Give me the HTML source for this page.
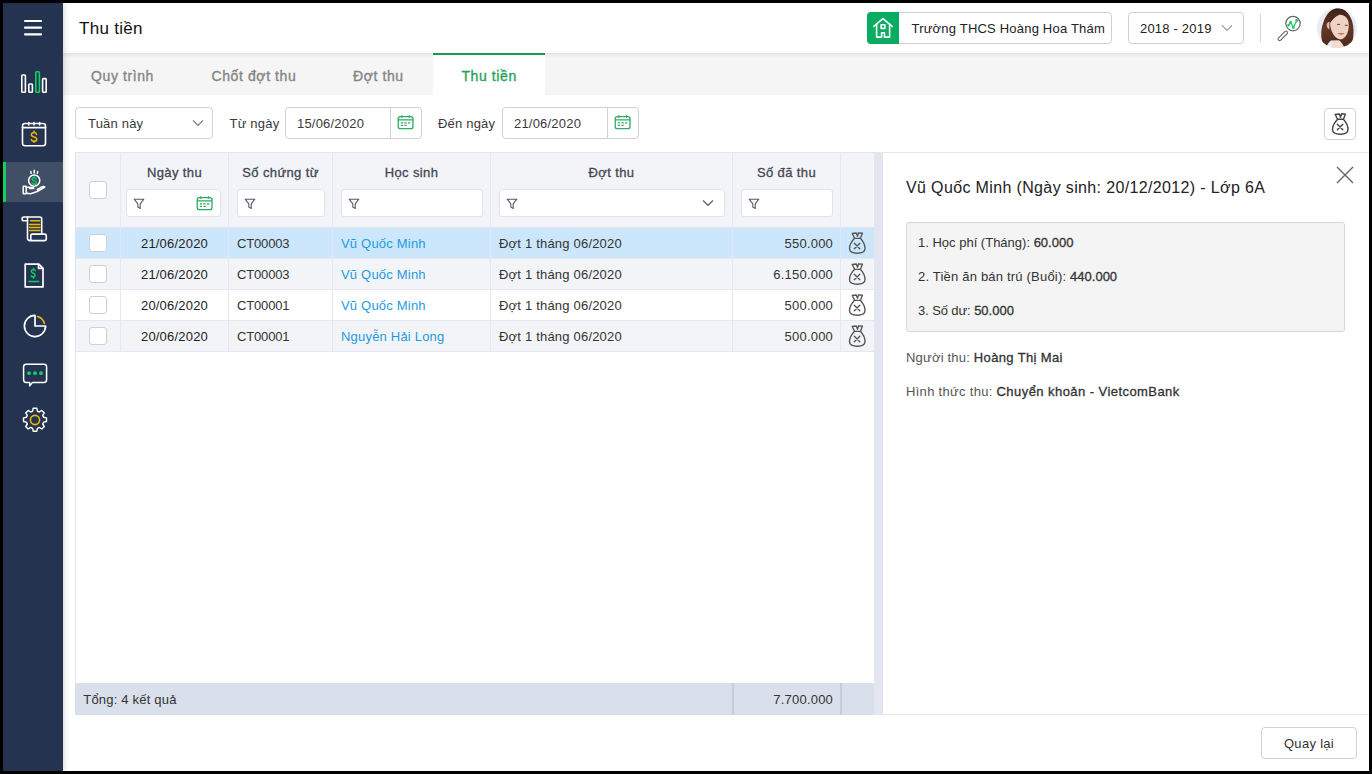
<!DOCTYPE html>
<html><head><meta charset="utf-8">
<style>
*{box-sizing:border-box;margin:0;padding:0}
html,body{width:1372px;height:774px;overflow:hidden;background:#000;font-family:"Liberation Sans",sans-serif;color:#222}
.a{position:absolute}
.t{position:absolute;white-space:nowrap}
#app{position:absolute;left:3px;top:3px;width:1366px;height:768px;background:#fff;overflow:hidden}
#side{position:absolute;left:3px;top:3px;width:60px;height:768px;background:#243450;z-index:5;box-shadow:1px 0 6px rgba(0,0,0,.18)}
#hdr{position:absolute;left:63px;top:3px;width:1306px;height:50px;background:#fff;box-shadow:0 1px 4px rgba(0,0,0,.12);z-index:2}
#tabs{position:absolute;left:63px;top:53px;width:1306px;height:42px;background:#f5f5f5}
.tab{font-size:14px;font-weight:400;color:#858585;-webkit-text-stroke:.35px #858585;letter-spacing:.6px;line-height:14px}
b{font-weight:400;-webkit-text-stroke:.3px currentColor;letter-spacing:.35px}
.box{position:absolute;border:1px solid #d2d2d2;border-radius:4px;background:#fff}
.f13{font-size:13px;line-height:13px;letter-spacing:.2px}
.th{font-size:13px;font-weight:400;color:#444753;-webkit-text-stroke:.3px #444753;letter-spacing:.38px;line-height:13px;text-align:center}
.fi{position:absolute;border:1px solid #e1e2ee;border-radius:3px;background:#fff;top:189px;height:28px}
.cb{position:absolute;left:89px;width:18px;height:18px;border:1px solid #cfcfd6;border-radius:3px;background:#fff}
.row{position:absolute;left:75px;width:799px;height:31px;border-bottom:1px solid #e6e7f0}
.vl{position:absolute;width:1px;background:#e6e7f0}
.lnk{color:#1e9be0}
</style></head><body>
<div id="app"></div>

<!-- SIDEBAR -->
<div id="side">
  <div class="a" style="left:0;top:159px;width:60px;height:40px;background:#414f66"></div>
  <div class="a" style="left:0;top:159px;width:3px;height:40px;background:#12cf62"></div>
  <svg class="a" style="left:0;top:0" width="60" height="440" viewBox="3 3 60 440" fill="none" stroke-linecap="round" stroke-linejoin="round">
    <!-- hamburger -->
    <g stroke="#fff" stroke-width="2.2"><line x1="25" y1="21" x2="41" y2="21"/><line x1="25" y1="27.7" x2="41" y2="27.7"/><line x1="25" y1="34.3" x2="41" y2="34.3"/></g>
    <!-- bars -->
    <g stroke="#fff" stroke-width="1.6"><rect x="21.8" y="75" width="3.6" height="17.3" rx=".8"/><rect x="28.8" y="84" width="3.6" height="8.3" rx=".8"/><rect x="42.6" y="78.6" width="3.6" height="13.7" rx=".8"/></g>
    <rect x="35.8" y="71.8" width="3.6" height="20.5" rx=".8" stroke="#12cf62" stroke-width="1.6"/>
    <!-- calendar $ -->
    <g stroke="#fff" stroke-width="1.6"><rect x="22.5" y="123.5" width="23" height="22.3" rx="2.5"/><line x1="22.5" y1="127.6" x2="45.5" y2="127.6"/>
    <path d="M28.8 125v-2.5M34 125v-2.5M39.6 125v-2.5"/></g>
    <path d="M36.6 134.4c-.4-1.1-1.4-1.8-2.6-1.8-1.5 0-2.6.9-2.6 2.1 0 1.3 1.1 1.8 2.6 2.2 1.6.4 2.7 1 2.7 2.3 0 1.3-1.2 2.2-2.7 2.2-1.2 0-2.3-.7-2.7-1.8M34 131.2v1.4M34 140.9v1.4" stroke="#f2b705" stroke-width="1.5"/>
    <!-- hand coin -->
    <g stroke="#fff" stroke-width="1.5">
      <circle cx="34.2" cy="180.6" r="5.6"/>
      <path d="M31.1 173.4l-.3-1.9M34.2 173.1v-2.9M37.3 173.4l.3-1.9"/>
      <rect x="23.2" y="186.2" width="3" height="7.6" rx=".5"/>
      <path d="M26.2 187.2h5.5c1.3 0 2.2.7 2.2 1.4h-4.5M26.2 193.2l4.5 .5 6.5-2.2 7.6-4.4c-.7-.8-1.9-.8-3-.2l-4.5 2.6"/>
    </g>
    <path d="M36.2 178.9c-.3-.8-1.1-1.3-2-1.3-1.1 0-2 .7-2 1.6 0 1 .9 1.4 2 1.7 1.2.3 2.1.8 2.1 1.8 0 1-.9 1.7-2.1 1.7-.9 0-1.8-.5-2.1-1.3M34.2 176.6v1M34.2 184v1" stroke="#12cf62" stroke-width="1.4"/>
    <!-- scroll -->
    <g stroke="#fff" stroke-width="1.6">
      <path d="M27.5 220.8h-3.5a1.9 1.9 0 0 1 0-3.8h15.8a1.9 1.9 0 0 1 1.9 1.9v15.3"/>
      <path d="M27.5 217v21.2a2.4 2.4 0 0 0 2.4 2.4h14.5a1.9 1.9 0 0 0 1.9-1.9v-2.9a1.7 1.7 0 0 0-1.7-1.7h-12.5a1.3 1.3 0 0 0-1.3 1.3v5.2"/>
    </g>
    <g stroke="#f2b705" stroke-width="1.5"><path d="M30.5 220.7h9.2M29.6 224.6h10.3M29.6 227.6h10.3M29.6 230.6h10.3"/></g>
    <!-- doc $ -->
    <g stroke="#fff" stroke-width="1.7"><path d="M25.2 264.2h13.7l4.1 4.2v18.5h-17.8z"/><path d="M38.5 264.5v3.8h4"/></g>
    <g stroke="#12cf62" stroke-width="1.5"><path d="M29 281.5h9.6"/><path d="M35.3 270.7c-.6-.9-1.8-1.2-2.7-.9-1.4.5-1.5 2.1-.4 2.8l1.9 1c1.3.7 1.3 2.6-.2 3.1-1 .3-2.3 0-2.8-.9M33.6 268.5v1.3M33.6 276.7v1.3"/></g>
    <!-- pie -->
    <g stroke="#fff" stroke-width="1.7"><path d="M35 315.4a10.6 10.6 0 1 0 10.6 10.6h-10.6z"/></g>
    <path d="M37.6 316.5a9.5 9.5 0 0 1 6.7 6.9" stroke="#f2b705" stroke-width="1.6"/>
    <!-- chat -->
    <g stroke="#fff" stroke-width="1.5"><path d="M26.2 364.2h17.8a2.6 2.6 0 0 1 2.6 2.6v13a2.6 2.6 0 0 1-2.6 2.6h-11.5l-2.8 3.5v-3.5h-3.5a2.6 2.6 0 0 1-2.6-2.6v-13a2.6 2.6 0 0 1 2.6-2.6z"/></g>
    <g fill="#12cf62"><circle cx="29" cy="373.2" r="1.9"/><circle cx="35" cy="373.2" r="1.9"/><circle cx="41" cy="373.2" r="1.9"/></g>
    <!-- gear -->
    <g stroke="#fff" stroke-width="1.4"><path d="M33.2 408.2h3.6l.6 2.9 1.9.9 2.5-1.6 2.5 2.5-1.6 2.5.9 1.9 2.9.6v3.6l-2.9.6-.9 1.9 1.6 2.5-2.5 2.5-2.5-1.6-1.9.9-.6 2.9h-3.6l-.6-2.9-1.9-.9-2.5 1.6-2.5-2.5 1.6-2.5-.9-1.9-2.9-.6v-3.6l2.9-.6.9-1.9-1.6-2.5 2.5-2.5 2.5 1.6 1.9-.9z"/></g>
    <circle cx="35" cy="420" r="4.6" stroke="#f2b705" stroke-width="1.6"/>
  </svg>
</div>

<!-- HEADER -->
<div id="hdr">
  <div class="t" style="left:16px;top:17.2px;font-size:17px;line-height:17px;letter-spacing:.28px;color:#111">Thu tiền</div>
</div>
<div class="a" style="left:867px;top:12px;width:245px;height:32px;border:1px solid #d0d0d0;border-radius:4px;background:#fff;z-index:3"></div>
<div class="a" style="left:867px;top:12px;width:32px;height:32px;background:#08ad62;border-radius:4px 0 0 4px;z-index:3"></div>
<svg class="a" style="left:867px;top:12px;z-index:4" width="32" height="32" fill="none" stroke="#fff" stroke-width="1.6" stroke-linejoin="round" stroke-linecap="round">
  <path d="M6.8 14.3l9.1-7.7 9.3 7.7"/><path d="M9.6 12.2v12.9h5v-4.3h2.8v4.3h5.2v-12.9"/><rect x="14.1" y="12.8" width="3.8" height="3.6"/>
</svg>
<div class="t f13" style="left:911.5px;top:21.5px;color:#222;z-index:4">Trường THCS Hoàng Hoa Thám</div>
<div class="a" style="left:1128px;top:12px;width:116px;height:32px;border:1px solid #d0d0d0;border-radius:4px;background:#fff;z-index:3"></div>
<div class="t f13" style="left:1140px;top:21.8px;color:#222;z-index:4">2018 - 2019</div>
<svg class="a" style="left:1220px;top:23px;z-index:4" width="14" height="10" fill="none" stroke="#999" stroke-width="1.2"><path d="M2 2.3l5 5 5-5"/></svg>
<div class="a" style="left:1260px;top:14px;width:1px;height:28px;background:#d5d5d5;z-index:4"></div>
<svg class="a" style="left:1272px;top:10px;z-index:4" width="36" height="36" fill="none" stroke-linecap="round" stroke-linejoin="round">
  <circle cx="21" cy="13.6" r="7.2" stroke="#666" stroke-width="1.2"/>
  <path d="M13.2 21.4L6.4 28.2a1.5 1.5 0 0 0 2.1 2.1l6.8-6.8a1.5 1.5 0 0 0-2.1-2.1z" stroke="#666" stroke-width="1.1"/>
  <path d="M16.5 15.3l2.1-3.2 2.8 5.6 3.3-7.2" stroke="#1ccc63" stroke-width="1.3"/>
  <g fill="#1ccc63"><circle cx="16.5" cy="15.3" r="1.3"/><circle cx="18.6" cy="12.1" r="1.3"/><circle cx="21.4" cy="17.7" r="1.3"/><circle cx="24.7" cy="10.5" r="1.4"/></g>
</svg>
<svg class="a" style="left:1317px;top:8px;z-index:4" width="40" height="40" viewBox="0 0 40 40">
  <defs><clipPath id="av"><circle cx="20" cy="20" r="20"/></clipPath>
  <linearGradient id="hg" x1="0" y1="0" x2="0" y2="1"><stop offset="0" stop-color="#3a2118"/><stop offset=".5" stop-color="#643826"/><stop offset="1" stop-color="#4a2a1e"/></linearGradient></defs>
  <g clip-path="url(#av)">
    <rect width="40" height="40" fill="#e7ecf2"/>
    <path d="M14 40c.5-4 1.5-7 4-9h5c2.5 2 3.5 5 4 9z" fill="#f2dcd0"/>
    <path d="M5 33c-1.5-6-1-13 1.5-19C9 7 13.5 .5 21 .3c7 0 11.5 5.5 14 12.5 2 6 2 14 .5 20.5-2 3.5-5 5-8.5 5.5-1.5-3-3-5-5-6.5l-8 .2c-2 1.5-3.5 3.5-4.5 6-2-.8-3.8-2.3-4.5-5.5z" fill="url(#hg)"/>
    <path d="M13.2 14.5c1.5-4 5-7.5 9.5-7.8 5-.2 8.5 3.5 9 8.8.4 4.5-.6 9.5-3 12.8-1.8 2.4-4 3.3-6 3-3-.5-5.8-3.5-7.6-7.3-1.3-2.8-2.2-6.5-1.9-9.5z" fill="#f0d2c4"/>
    <path d="M13 15c2.5-3.5 5.5-6.8 10-8.5-3.5-1-8.5.5-10.5 4.5z" fill="#4a2a1e"/>
    <path d="M12.5 14c-1-.2-2.6.6-2.8 2.6-.2 2 .8 4.2 2.6 4.8z" fill="#e5b9a5"/>
    <path d="M20 16.4h3.2M27.8 17.3h3" stroke="#6a4a45" stroke-width="1"/>
    <path d="M21.6 25.7c1.7.6 3.4.6 4.9-.2" stroke="#d86d74" stroke-width="1.4" stroke-linecap="round"/>
  </g>
</svg>
<!-- TABS -->
<div id="tabs"></div>
<div class="a" style="left:433px;top:53px;width:112px;height:42px;background:#fff;border-top:2px solid #1fa45a"></div>
<div class="t tab" style="left:91px;top:68.7px">Quy trình</div>
<div class="t tab" style="left:211.5px;top:68.7px">Chốt đợt thu</div>
<div class="t tab" style="left:353px;top:68.7px">Đợt thu</div>
<div class="t tab" style="left:461.4px;top:68.7px;color:#1fa45a;-webkit-text-stroke:.35px #1fa45a">Thu tiền</div>

<!-- FILTER ROW -->
<div class="box" style="left:75px;top:107px;width:138px;height:32px"></div>
<div class="t f13" style="left:88px;top:117px;color:#3a3a3a">Tuần này</div>
<svg class="a" style="left:190.5px;top:118px" width="14" height="10" fill="none" stroke="#777" stroke-width="1.2"><path d="M2 2.3l5 5 5-5"/></svg>
<div class="t f13" style="left:229.5px;top:117px;color:#3a3a3a">Từ ngày</div>
<div class="box" style="left:285px;top:107px;width:137px;height:32px"></div>
<div class="a" style="left:390px;top:108px;width:1px;height:30px;background:#d2d2d2"></div>
<div class="t f13" style="left:297px;top:117px;color:#3a3a3a">15/06/2020</div>
<div class="t f13" style="left:438px;top:117px;color:#3a3a3a">Đến ngày</div>
<div class="box" style="left:502px;top:107px;width:137px;height:32px"></div>
<div class="a" style="left:607px;top:108px;width:1px;height:30px;background:#d2d2d2"></div>
<div class="t f13" style="left:514px;top:117px;color:#3a3a3a">21/06/2020</div>
<svg class="a cal" style="left:397px;top:114px" width="18" height="17" fill="none" stroke="#2eac63" stroke-width="1.3"><rect x="1.2" y="2.6" width="14.8" height="12" rx="2.2"/><path d="M1.2 5.9h14.8M4.8 1.2v2.6M12.4 1.2v2.6"/><path d="M3.8 8.8h2.3M7.4 8.8h2.3M11 8.8h2.3M3.8 11.4h2.3M7.4 11.4h2.3" stroke-width="1.2"/></svg>
<svg class="a cal" style="left:614px;top:114px" width="18" height="17" fill="none" stroke="#2eac63" stroke-width="1.3"><rect x="1.2" y="2.6" width="14.8" height="12" rx="2.2"/><path d="M1.2 5.9h14.8M4.8 1.2v2.6M12.4 1.2v2.6"/><path d="M3.8 8.8h2.3M7.4 8.8h2.3M11 8.8h2.3M3.8 11.4h2.3M7.4 11.4h2.3" stroke-width="1.2"/></svg>
<div class="box" style="left:1324px;top:107.5px;width:32px;height:32px"></div>
<svg class="a" style="left:1324.5px;top:108.5px" width="30" height="30" fill="none" stroke="#444" stroke-width="1.4" stroke-linejoin="round" stroke-linecap="round"><path d="M10.2 5.5L12.6 10.3M20.4 5.2L18.4 10.3M10.2 5.5L14.3 5L15.5 8.2L16.6 4.8L20.4 5.2M12.6 10.3H18.4"/><path d="M12.6 10.3C9.5 13.5 7.5 17.5 7.5 20.5C7.5 23.5 10.5 25.2 15.3 25.2C20.1 25.2 23 23.5 23 20.5C23 17.5 21.3 13.5 18.4 10.3"/><path d="M12.3 15.3L17.8 20.8M17.8 15.3L12.3 20.8"/></svg>

<!-- TABLE -->
<div class="a" style="left:75px;top:152px;width:1294px;height:1px;background:#e4e5ef"></div>
<div class="a" style="left:75px;top:152px;width:799px;height:563px;border-left:1px solid #e4e5ef;background:#fff"></div>
<div class="a" style="left:75px;top:152px;width:799px;height:76px;background:#f3f4f8;border-top:1px solid #e4e5ef;border-bottom:1px solid #e4e5ef"></div>
<div class="row" style="top:228px;background:#cce7fc"></div>
<div class="row" style="top:259px;background:#f3f4f8"></div>
<div class="row" style="top:290px;background:#fff"></div>
<div class="row" style="top:321px;background:#f3f4f8"></div>
<div class="vl" style="left:75px;top:152px;height:531px;background:#e4e5ef"></div>
<div class="vl" style="left:120px;top:152px;height:200px"></div>
<div class="vl" style="left:228px;top:152px;height:200px"></div>
<div class="vl" style="left:332px;top:152px;height:200px"></div>
<div class="vl" style="left:490px;top:152px;height:200px"></div>
<div class="vl" style="left:732px;top:152px;height:200px"></div>
<div class="vl" style="left:840px;top:152px;height:200px"></div>

<div class="th t" style="left:121px;width:107px;top:166.2px">Ngày thu</div>
<div class="th t" style="left:229px;width:103px;top:166.2px">Số chứng từ</div>
<div class="th t" style="left:333px;width:157px;top:166.2px">Học sinh</div>
<div class="th t" style="left:491px;width:241px;top:166.2px">Đợt thu</div>
<div class="th t" style="left:733px;width:107px;top:166.2px">Số đã thu</div>
<div class="cb" style="top:181px"></div>

<div class="fi" style="left:126px;width:95px"></div>
<div class="fi" style="left:237px;width:88px"></div>
<div class="fi" style="left:341px;width:142px"></div>
<div class="fi" style="left:499px;width:226px"></div>
<div class="fi" style="left:741px;width:92px"></div>
<svg width="0" height="0" style="position:absolute"><defs><path id="fun" d="M1.2 1.2h9.6l-3.6 4.6v4.6l-2.4-1.4v-3.2z"/></defs></svg>
<svg class="a" style="left:133px;top:197.8px" width="12" height="12" fill="none" stroke="#565a68" stroke-width="1.1" stroke-linejoin="round"><use href="#fun"/></svg>
<svg class="a" style="left:244px;top:197.8px" width="12" height="12" fill="none" stroke="#565a68" stroke-width="1.1" stroke-linejoin="round"><use href="#fun"/></svg>
<svg class="a" style="left:348px;top:197.8px" width="12" height="12" fill="none" stroke="#565a68" stroke-width="1.1" stroke-linejoin="round"><use href="#fun"/></svg>
<svg class="a" style="left:506px;top:197.8px" width="12" height="12" fill="none" stroke="#565a68" stroke-width="1.1" stroke-linejoin="round"><use href="#fun"/></svg>
<svg class="a" style="left:748px;top:197.8px" width="12" height="12" fill="none" stroke="#565a68" stroke-width="1.1" stroke-linejoin="round"><use href="#fun"/></svg>
<svg class="a" style="left:196px;top:195px" width="18" height="17" fill="none" stroke="#2eac63" stroke-width="1.3"><rect x="1.2" y="2.6" width="14.8" height="12" rx="2.2"/><path d="M1.2 5.9h14.8M4.8 1.2v2.6M12.4 1.2v2.6"/><path d="M3.8 8.8h2.3M7.4 8.8h2.3M11 8.8h2.3M3.8 11.4h2.3M7.4 11.4h2.3" stroke-width="1.2"/></svg>
<svg class="a" style="left:701px;top:198px" width="14" height="10" fill="none" stroke="#666" stroke-width="1.3"><path d="M2 2.5l5 4.8 5-4.8"/></svg>

<!-- rows -->
<div class="cb" style="top:234px"></div>
<div class="cb" style="top:265px"></div>
<div class="cb" style="top:296px"></div>
<div class="cb" style="top:327px"></div>
<div class="t f13" style="left:121px;width:107px;text-align:center;top:237.2px;color:#222">21/06/2020</div>
<div class="t f13" style="left:237px;top:237.2px;color:#333;letter-spacing:-.15px">CT00003</div>
<div class="t f13 lnk" style="left:341px;top:237.2px">Vũ Quốc Minh</div>
<div class="t f13" style="left:499px;top:237.2px;color:#333">Đợt 1 tháng 06/2020</div>
<div class="t f13" style="left:733px;width:100px;text-align:right;top:237.2px;color:#333">550.000</div>
<svg class="a" style="left:842px;top:228px" width="30" height="30" fill="none" stroke="#555" stroke-width="1.35" stroke-linejoin="round" stroke-linecap="round"><path d="M10.2 5.5L12.6 10.3M20.4 5.2L18.4 10.3M10.2 5.5L14.3 5L15.5 8.2L16.6 4.8L20.4 5.2M12.6 10.3H18.4"/><path d="M12.6 10.3C9.5 13.5 7.5 17.5 7.5 20.5C7.5 23.5 10.5 25.2 15.3 25.2C20.1 25.2 23 23.5 23 20.5C23 17.5 21.3 13.5 18.4 10.3"/><path d="M12.3 15.3L17.8 20.8M17.8 15.3L12.3 20.8"/></svg>
<div class="t f13" style="left:121px;width:107px;text-align:center;top:268.2px;color:#222">21/06/2020</div>
<div class="t f13" style="left:237px;top:268.2px;color:#333;letter-spacing:-.15px">CT00003</div>
<div class="t f13 lnk" style="left:341px;top:268.2px">Vũ Quốc Minh</div>
<div class="t f13" style="left:499px;top:268.2px;color:#333">Đợt 1 tháng 06/2020</div>
<div class="t f13" style="left:733px;width:100px;text-align:right;top:268.2px;color:#333">6.150.000</div>
<svg class="a" style="left:842px;top:259px" width="30" height="30" fill="none" stroke="#555" stroke-width="1.35" stroke-linejoin="round" stroke-linecap="round"><path d="M10.2 5.5L12.6 10.3M20.4 5.2L18.4 10.3M10.2 5.5L14.3 5L15.5 8.2L16.6 4.8L20.4 5.2M12.6 10.3H18.4"/><path d="M12.6 10.3C9.5 13.5 7.5 17.5 7.5 20.5C7.5 23.5 10.5 25.2 15.3 25.2C20.1 25.2 23 23.5 23 20.5C23 17.5 21.3 13.5 18.4 10.3"/><path d="M12.3 15.3L17.8 20.8M17.8 15.3L12.3 20.8"/></svg>
<div class="t f13" style="left:121px;width:107px;text-align:center;top:299.2px;color:#222">20/06/2020</div>
<div class="t f13" style="left:237px;top:299.2px;color:#333;letter-spacing:-.15px">CT00001</div>
<div class="t f13 lnk" style="left:341px;top:299.2px">Vũ Quốc Minh</div>
<div class="t f13" style="left:499px;top:299.2px;color:#333">Đợt 1 tháng 06/2020</div>
<div class="t f13" style="left:733px;width:100px;text-align:right;top:299.2px;color:#333">500.000</div>
<svg class="a" style="left:842px;top:290px" width="30" height="30" fill="none" stroke="#555" stroke-width="1.35" stroke-linejoin="round" stroke-linecap="round"><path d="M10.2 5.5L12.6 10.3M20.4 5.2L18.4 10.3M10.2 5.5L14.3 5L15.5 8.2L16.6 4.8L20.4 5.2M12.6 10.3H18.4"/><path d="M12.6 10.3C9.5 13.5 7.5 17.5 7.5 20.5C7.5 23.5 10.5 25.2 15.3 25.2C20.1 25.2 23 23.5 23 20.5C23 17.5 21.3 13.5 18.4 10.3"/><path d="M12.3 15.3L17.8 20.8M17.8 15.3L12.3 20.8"/></svg>
<div class="t f13" style="left:121px;width:107px;text-align:center;top:330.2px;color:#222">20/06/2020</div>
<div class="t f13" style="left:237px;top:330.2px;color:#333;letter-spacing:-.15px">CT00001</div>
<div class="t f13 lnk" style="left:341px;top:330.2px">Nguyễn Hải Long</div>
<div class="t f13" style="left:499px;top:330.2px;color:#333">Đợt 1 tháng 06/2020</div>
<div class="t f13" style="left:733px;width:100px;text-align:right;top:330.2px;color:#333">500.000</div>
<svg class="a" style="left:842px;top:321px" width="30" height="30" fill="none" stroke="#555" stroke-width="1.35" stroke-linejoin="round" stroke-linecap="round"><path d="M10.2 5.5L12.6 10.3M20.4 5.2L18.4 10.3M10.2 5.5L14.3 5L15.5 8.2L16.6 4.8L20.4 5.2M12.6 10.3H18.4"/><path d="M12.6 10.3C9.5 13.5 7.5 17.5 7.5 20.5C7.5 23.5 10.5 25.2 15.3 25.2C20.1 25.2 23 23.5 23 20.5C23 17.5 21.3 13.5 18.4 10.3"/><path d="M12.3 15.3L17.8 20.8M17.8 15.3L12.3 20.8"/></svg>
<!-- footer -->
<div class="a" style="left:75px;top:683px;width:799px;height:32px;background:#dae0eb"></div>
<div class="a" style="left:732px;top:683px;width:2px;height:32px;background:#c3cddc"></div>
<div class="a" style="left:840px;top:683px;width:2px;height:32px;background:#c3cddc"></div>
<div class="t f13" style="left:83.3px;top:693px;color:#333">Tổng: 4 kết quả</div>
<div class="t f13" style="left:734px;width:99px;text-align:right;top:693px;color:#333">7.700.000</div>
<!-- splitter -->
<div class="a" style="left:874px;top:153px;width:9px;height:562px;background:#e3e5f0"></div>

<!-- RIGHT PANEL -->
<div class="t" style="left:906px;top:179.5px;font-size:16px;line-height:16px;letter-spacing:.36px;color:#222">Vũ Quốc Minh (Ngày sinh: 20/12/2012) - Lớp 6A</div>
<svg class="a" style="left:1334px;top:164px" width="22" height="22" fill="none" stroke="#666" stroke-width="1.4"><path d="M3 3l16 16M19 3L3 19"/></svg>
<div class="a" style="left:906px;top:222px;width:439px;height:110px;background:#f4f4f4;border:1px solid #d6d6d6;border-radius:3px"></div>
<div class="t f13" style="left:918px;top:236.3px;color:#333;letter-spacing:0">1. Học phí (Tháng): <b style="letter-spacing:0">60.000</b></div>
<div class="t f13" style="left:918px;top:270.3px;color:#333">2. Tiền ăn bán trú (Buổi): <b style="letter-spacing:0">440.000</b></div>
<div class="t f13" style="left:918px;top:304.3px;color:#333;letter-spacing:-.1px">3. Số dư: <b style="letter-spacing:0">50.000</b></div>
<div class="t f13" style="left:906px;top:350.7px;color:#555">Người thu: <b style="color:#333">Hoàng Thị Mai</b></div>
<div class="t f13" style="left:906px;top:384.7px;color:#555;letter-spacing:.3px">Hình thức thu: <b style="color:#333;letter-spacing:.44px">Chuyển khoản - VietcomBank</b></div>

<!-- bottom bar -->
<div class="a" style="left:883px;top:714px;width:486px;height:1px;background:#e4e5ef"></div>
<div class="box" style="left:1261px;top:727px;width:96px;height:32px"></div>
<div class="t f13" style="left:1261px;width:96px;text-align:center;top:737px;color:#333;letter-spacing:.3px">Quay lại</div>
</body></html>
